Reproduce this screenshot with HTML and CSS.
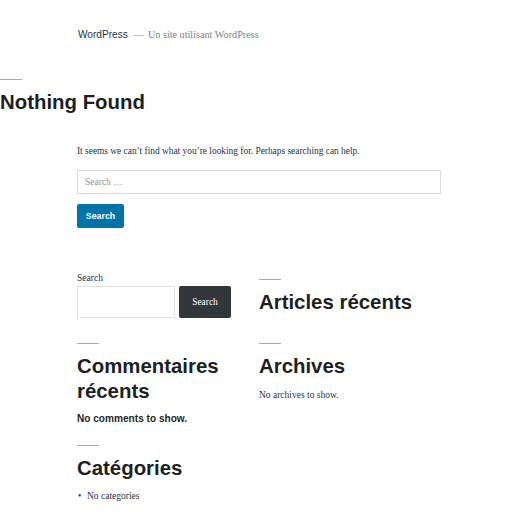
FILE: index.html
```html
<!DOCTYPE html>
<html lang="fr">
<head>
<meta charset="utf-8">
<title>Nothing Found – WordPress</title>
<link rel="stylesheet" href="styles.css">
</head>
<body>
<header class="site-header">
  <span class="site-title">WordPress</span>
  <span class="dash">—</span>
  <span class="site-desc">Un site utilisant WordPress</span>
</header>

<section class="page-header">
  <hr class="sep">
  <h1 class="page-title">Nothing Found</h1>
</section>

<main class="content">
  <p class="intro">It seems we can’t find what you’re looking for. Perhaps searching can help.</p>
  <div class="search-form">
    <input class="search-field" type="search" placeholder="Search …">
    <button class="search-submit" type="button">Search</button>
  </div>
</main>

<aside class="widgets">
  <div class="col">
    <div class="widget widget-search">
      <label class="wlabel">Search</label>
      <div class="wsearch">
        <input class="wsearch-input" type="search">
        <button class="wsearch-btn" type="button">Search</button>
      </div>
    </div>
    <div class="widget widget-comments">
      <hr class="sep">
      <h2 class="wtitle">Commentaires récents</h2>
      <p class="wtext-bold">No comments to show.</p>
    </div>
    <div class="widget widget-cats">
      <hr class="sep">
      <h2 class="wtitle">Catégories</h2>
      <ul class="wlist"><li>No categories</li></ul>
    </div>
  </div>
  <div class="col col-right">
    <div class="widget widget-posts">
      <hr class="sep">
      <h2 class="wtitle">Articles récents</h2>
    </div>
    <div class="widget widget-archives">
      <hr class="sep">
      <h2 class="wtitle">Archives</h2>
      <p class="wtext">No archives to show.</p>
    </div>
  </div>
</aside>
</body>
</html>
```

FILE: styles.css
```css
html, body {
  margin: 0;
  padding: 0;
  background: #fff;
}
body {
  font-family: "Liberation Serif", "Times New Roman", serif;
  color: #28303d;
  width: 512px;
}

.site-header {
  padding: 28px 0 0 78px;
  height: 14px;
  font-size: 10px;
  line-height: 14px;
  display: flex;
  align-items: baseline;
}
.site-title {
  font-family: "Liberation Sans", Arial, sans-serif;
  font-size: 10.1px;
  color: #28303d;
}
.dash {
  color: #8a8d92;
  margin: 0 4px 0 6px;
  font-size: 10.2px;
}
.site-desc {
  color: #7d8086;
  font-size: 10.2px;
}

.sep {
  border: 0;
  height: 1px;
  width: 22px;
  background: #a9abae;
  margin: 0;
}

.page-header {
  margin-top: 37px;
}
.page-title {
  font-family: "Liberation Sans", Arial, sans-serif;
  font-weight: 700;
  font-size: 20.4px;
  line-height: 25px;
  margin: 10px 0 0 0;
  color: #1d1f23;
}

.content {
  margin: 29px 0 0 77px;
  width: 364px;
}
.intro {
  font-size: 9.4px;
  line-height: 15px;
  margin: 0;
  color: #28303d;
}
.search-form {
  margin-top: 11px;
  display: flex;
  flex-direction: column;
  align-items: flex-start;
  gap: 10px;
}
.search-field {
  box-sizing: border-box;
  width: 364px;
  height: 24px;
  border: 1px solid #dcdcde;
  border-radius: 0;
  padding: 0 7px;
  font-family: "Liberation Serif", serif;
  font-size: 9.5px;
  color: #28303d;
  background: #fff;
  margin: 0;
  outline: none;
}
.search-field::placeholder {
  color: #8c8f94;
}
.search-submit {
  box-sizing: border-box;
  height: 24px;
  width: 47px;
  padding: 0;
  border: 0;
  border-radius: 2px;
  background: #0073aa;
  color: #fff;
  font-family: "Liberation Sans", Arial, sans-serif;
  font-weight: 700;
  font-size: 8.8px;
  margin: 0;
}

.widgets {
  margin: 43px 0 0 77px;
  width: 364px;
  display: grid;
  grid-template-columns: 182px 182px;
  align-items: start;
}
.col-right {
  padding-top: 8px;
}
.widget-search .wlabel {
  display: block;
  font-size: 9.6px;
  line-height: 14px;
  margin-bottom: 1px;
  color: #28303d;
}
.wsearch {
  display: flex;
  gap: 4px;
}
.wsearch-input {
  box-sizing: border-box;
  width: 98px;
  height: 32px;
  border: 1px solid #e2e3e5;
  background: #fff;
  margin: 0;
  outline: none;
}
.wsearch-btn {
  box-sizing: border-box;
  width: 52px;
  height: 32px;
  border: 0;
  border-radius: 2px;
  background: #32373c;
  color: #fff;
  font-family: "Liberation Serif", serif;
  font-size: 9.4px;
  padding: 0;
  margin: 0;
}

.widget-comments {
  margin-top: 25px;
}
.widget-cats {
  margin-top: 19px;
}
.widget-archives {
  margin-top: 28px;
}

.wtitle {
  font-family: "Liberation Sans", Arial, sans-serif;
  font-weight: 700;
  font-size: 20.4px;
  line-height: 25px;
  margin: 10px 0 0 0;
  color: #1d1f23;
}
.wtext-bold {
  font-family: "Liberation Sans", Arial, sans-serif;
  font-weight: 700;
  font-size: 10.1px;
  line-height: 14px;
  margin: 8px 0 0 0;
  color: #1d1f23;
}
.wtext {
  font-size: 9.5px;
  line-height: 14px;
  margin: 9px 0 0 0;
  color: #28303d;
}
.wlist {
  list-style: none;
  margin: 8px 0 0 0;
  padding: 0;
  font-size: 9.5px;
  line-height: 14px;
  color: #28303d;
}
.wlist li {
  display: flex;
}
.wlist li::before {
  content: "•";
  width: 10px;
  padding-left: 1px;
  box-sizing: border-box;
}
```
